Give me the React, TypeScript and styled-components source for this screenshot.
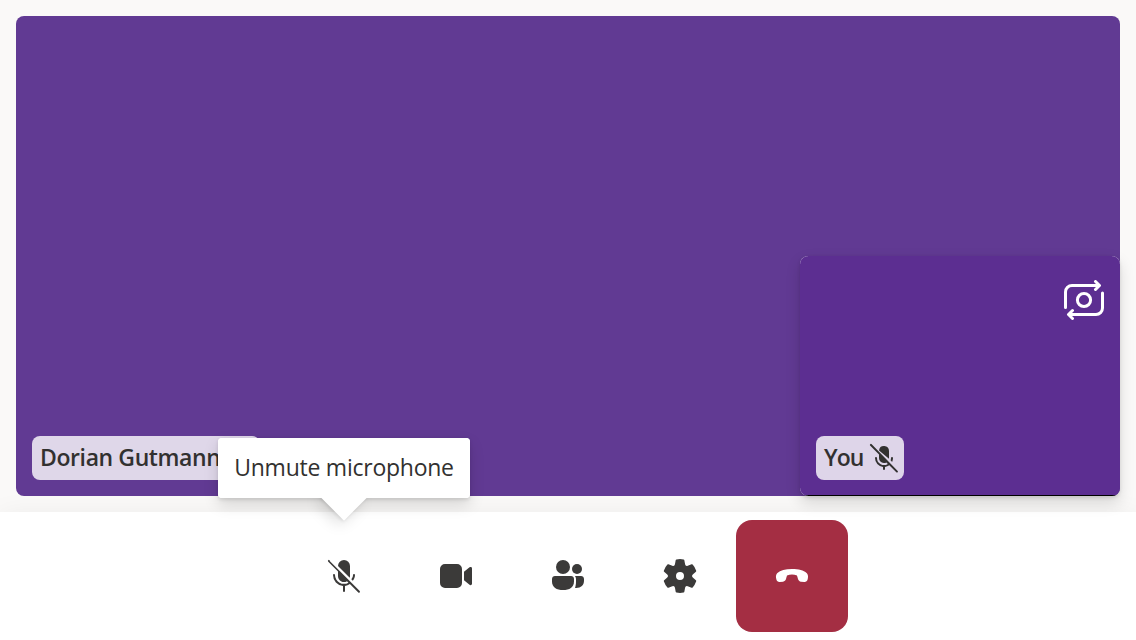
import React from "react";
import styled, { createGlobalStyle } from "styled-components";

const Global = createGlobalStyle`
  body { margin: 0; background: #faf9f8; overflow: hidden; }
  * { box-sizing: border-box; }
`;

const Screen = styled.div`
  width: 1136px;
  height: 640px;
  display: flex;
  flex-direction: column;
  font-family: "Open Sans", "Noto Sans", sans-serif;
  color: #323130;
`;

const Stage = styled.main`
  height: 512px;
  padding: 16px;
  display: flex;
`;

const RemoteVideo = styled.section`
  position: relative;
  z-index: 1;
  flex: 1;
  display: flex;
  align-items: flex-end;
  justify-content: space-between;
  background: #613a93;
  border-radius: 8px;
`;

const RemoteFooter = styled.div`
  padding: 16px;
`;

const LocalVideo = styled.section`
  width: 320px;
  height: 240px;
  padding: 24px 16px 16px;
  display: flex;
  flex-direction: column;
  justify-content: space-between;
  background:
    radial-gradient(circle at 8px 8px, transparent 7.3px, rgba(255, 255, 255, 0.4) 7.9px) left top / 8px 8px no-repeat,
    radial-gradient(circle at 0 8px, transparent 7.3px, rgba(255, 255, 255, 0.4) 7.9px) right top / 8px 8px no-repeat,
    radial-gradient(circle at 8px 0, transparent 7.3px, rgba(255, 255, 255, 0.4) 7.9px) left bottom / 8px 8px no-repeat,
    linear-gradient(#5c2e91 239px, #000 239px);
  border-radius: 8px;
  box-shadow: 0 6.4px 14.4px rgba(0, 0, 0, 0.132), 0 1.2px 3.6px rgba(0, 0, 0, 0.108);
`;

const FlipButton = styled.button`
  align-self: flex-end;
  width: 40px;
  height: 40px;
  padding: 0;
  border: 0;
  background: none;
  color: #fff;
  svg { display: block; }
`;

const NameTag = styled.div<{ $width: number }>`
  width: ${(p) => p.$width}px;
  height: 44px;
  padding: 0 4px 0 8px;
  display: flex;
  align-items: center;
  justify-content: space-between;
  border-radius: 8px;
  background: rgba(255, 255, 255, 0.8);
  font-size: 23px;
  line-height: 43px;
  font-weight: 600;
  white-space: nowrap;
`;

const TagText = styled.span<{ $spacing: number }>`
  height: 44px;
  letter-spacing: ${(p) => p.$spacing}px;
`;

const ControlBar = styled.footer`
  height: 128px;
  padding: 8px 0;
  display: flex;
  justify-content: center;
  background: #fff;
  box-shadow: 0 6.4px 28.8px rgba(0, 0, 0, 0.08);
`;

const Control = styled.button<{ $danger?: boolean }>`
  position: relative;
  z-index: ${(p) => (p.$danger ? 0 : 2)};
  width: 112px;
  height: 112px;
  padding: 0;
  border: 0;
  border-radius: 16px;
  display: flex;
  align-items: center;
  justify-content: center;
  background: ${(p) => (p.$danger ? "#a42e43" : "transparent")};
  color: ${(p) => (p.$danger ? "#fff" : "#3b3a39")};
  font-family: inherit;
`;

const Tooltip = styled.div`
  position: absolute;
  left: 50%;
  bottom: 134px;
  transform: translateX(-50%);
  width: 252px;
  height: 60px;
  border-radius: 4px;
  background: #fff;
  box-shadow: 0 6.4px 14.4px rgba(0, 0, 0, 0.132), 0 1.2px 3.6px rgba(0, 0, 0, 0.108);
`;

const Beak = styled.span`
  position: absolute;
  left: 110px;
  top: 44px;
  width: 32px;
  height: 32px;
  transform: rotate(45deg);
  background: #fff;
  box-shadow: 0 6.4px 14.4px rgba(0, 0, 0, 0.132), 0 1.2px 3.6px rgba(0, 0, 0, 0.108);
`;

const TooltipText = styled.span`
  position: relative;
  display: block;
  height: 60px;
  border-radius: 4px;
  background: #fff;
  color: #323130;
  font-size: 23px;
  font-weight: 400;
  line-height: 59px;
  letter-spacing: -0.25px;
  text-align: center;
  white-space: nowrap;
`;

type IconProps = { size?: number; grid?: number; children: React.ReactNode };
const Icon = ({ size = 40, grid = 20, children }: IconProps) => (
  <svg width={size} height={size} viewBox={`0 0 ${grid} ${grid}`} fill="currentColor" aria-hidden="true">
    {children}
  </svg>
);

const MicOff = () => (
  <Icon>
    <path d="M2.85 2.15a.5.5 0 1 0-.7.7L7 7.7V10a3 3 0 0 0 4.5 2.6l.73.74A4.5 4.5 0 0 1 5.5 9.5a.5.5 0 0 0-1 0 5.5 5.5 0 0 0 5 5.48v2.52a.5.5 0 0 0 1 0v-2.52a5.47 5.47 0 0 0 2.44-.93l4.2 4.2a.5.5 0 0 0 .71-.7l-15-15Z" />
    <path d="M13 10c0 .3-.05.6-.13.88L7 5.01V5a3 3 0 0 1 6 0v5ZM14.4 12.4l-.74-.74c.5-.64.84-1.36.84-2.16a.5.5 0 0 1 1 0c0 1.06-.4 2.07-1.1 2.9Z" />
  </Icon>
);

const MicOffSmall = () => (
  <Icon size={32} grid={16}>
    <path d="M1.85 1.15a.5.5 0 1 0-.7.7L5.5 6.2V8a2.5 2.5 0 0 0 3.68 2.2l.75.74A3.5 3.5 0 0 1 4.5 8a.5.5 0 0 0-1 0 4.5 4.5 0 0 0 4 4.47v1.03a.5.5 0 0 0 1 0v-1.03a4.5 4.5 0 0 0 2.15-.81l3.5 3.5a.5.5 0 0 0 .7-.71l-13-13.3Z" />
    <path d="M10.5 8v.38L5.52 4.2A2.5 2.5 0 0 1 10.5 4.5V8ZM12.06 9.94l-.78-.78c.14-.36.22-.75.22-1.16a.5.5 0 0 1 1 0c0 .7-.16 1.36-.44 1.94Z" />
  </Icon>
);

const Video = () => (
  <Icon>
    <path d="M13 6.5A2.5 2.5 0 0 0 10.5 4h-6A2.5 2.5 0 0 0 2 6.5v7A2.5 2.5 0 0 0 4.5 16h6a2.5 2.5 0 0 0 2.5-2.5v-7Zm1 1.43v4.15l2.76 2.35A.75.75 0 0 0 18 13.86V6.2a.75.75 0 0 0-1.23-.57L14 7.93Z" />
  </Icon>
);

const People = () => (
  <Icon>
    <circle cx="7.5" cy="5.5" r="3.5" />
    <circle cx="14.5" cy="6.5" r="2.5" />
    <path d="M2 11.5v1.2C2 15.6 4.3 17 7.5 17S13 15.6 13 12.7v-1.2c0-.85-.65-1.5-1.5-1.5h-8C2.65 10 2 10.65 2 11.5Z" />
    <path d="M13.5 15.98c.2.02.4.02.6.02 2.4 0 3.9-1.4 3.9-3.6v-.9c0-.85-.65-1.5-1.5-1.5h-3c.32.43.5.95.5 1.5v1.2c0 1.3-.2 2.4-.5 3.28Z" />
  </Icon>
);

const Settings = () => (
  <Icon>
    <path d="M1.91 7.38A8.5 8.5 0 0 1 3.7 4.3a.5.5 0 0 1 .54-.13l1.92.68a1 1 0 0 0 1.32-.76l.36-2a.5.5 0 0 1 .4-.4 8.53 8.53 0 0 1 3.55 0c.2.04.35.2.38.4l.37 2a1 1 0 0 0 1.32.76l1.92-.68a.5.5 0 0 1 .54.13 8.5 8.5 0 0 1 1.78 3.08c.06.2 0 .4-.15.54l-1.56 1.32a1 1 0 0 0 0 1.52l1.56 1.32a.5.5 0 0 1 .15.54 8.5 8.5 0 0 1-1.78 3.08.5.5 0 0 1-.54.13l-1.92-.68a1 1 0 0 0-1.32.76l-.37 2a.5.5 0 0 1-.38.4 8.53 8.53 0 0 1-3.56 0 .5.5 0 0 1-.39-.4l-.36-2a1 1 0 0 0-1.32-.76l-1.92.68a.5.5 0 0 1-.54-.13 8.5 8.5 0 0 1-1.78-3.08.5.5 0 0 1 .15-.54l1.56-1.32a1 1 0 0 0 0-1.52L2.06 7.92a.5.5 0 0 1-.15-.54ZM8 10a2 2 0 1 0 4 0 2 2 0 0 0-4 0Z" />
  </Icon>
);

const CallEnd = () => (
  <Icon>
    <path d="m17.96 10.94-.16.83c-.15.78-.87 1.3-1.69 1.22l-1.63-.16c-.72-.07-1.27-.6-1.48-1.33-.3-1-.5-1.75-.5-1.75a6.5 6.5 0 0 0-5 0s-.2.75-.5 1.75c-.2.67-.77 1.26-1.48 1.33l-1.63.16c-.81.08-1.54-.44-1.69-1.22l-.16-.83c-.17-.87.03-1.76.66-2.39C4.18 7.09 6.6 6.51 10 6.5c3.4 0 5.82.58 7.3 2.05.63.63.83 1.52.66 2.39Z" />
  </Icon>
);

const FlipCamera = () => (
  <svg width="40" height="40" viewBox="0 0 40 40" fill="none" stroke="currentColor" strokeWidth="3" strokeLinecap="round" strokeLinejoin="round" aria-hidden="true">
    <path d="M1.5 27.5V12A6.5 6.5 0 0 1 8 5.5h27M31.5 1.5l4 4-4 4" />
    <path d="M38.5 13v15a6.5 6.5 0 0 1-6.5 6.5H5M8.5 30.5l-4 4 4 4" />
    <circle cx="20" cy="20" r="6.6" />
  </svg>
);

export default function App() {
  return (
    <Screen>
      <Global />
      <Stage>
        <RemoteVideo>
          <RemoteFooter>
            <NameTag $width={228}>
              <TagText $spacing={-0.4}>Dorian Gutmann</TagText>
            </NameTag>
          </RemoteFooter>
          <LocalVideo>
            <FlipButton aria-label="Switch camera">
              <FlipCamera />
            </FlipButton>
            <NameTag $width={88}>
              <TagText $spacing={-0.9}>You</TagText>
              <MicOffSmall />
            </NameTag>
          </LocalVideo>
        </RemoteVideo>
      </Stage>
      <ControlBar>
        <Control>
          <MicOff />
          <Tooltip role="tooltip">
            <Beak />
            <TooltipText>Unmute microphone</TooltipText>
          </Tooltip>
        </Control>
        <Control aria-label="Turn off camera">
          <Video />
        </Control>
        <Control aria-label="People">
          <People />
        </Control>
        <Control aria-label="Settings">
          <Settings />
        </Control>
        <Control $danger aria-label="Leave call">
          <CallEnd />
        </Control>
      </ControlBar>
    </Screen>
  );
}
